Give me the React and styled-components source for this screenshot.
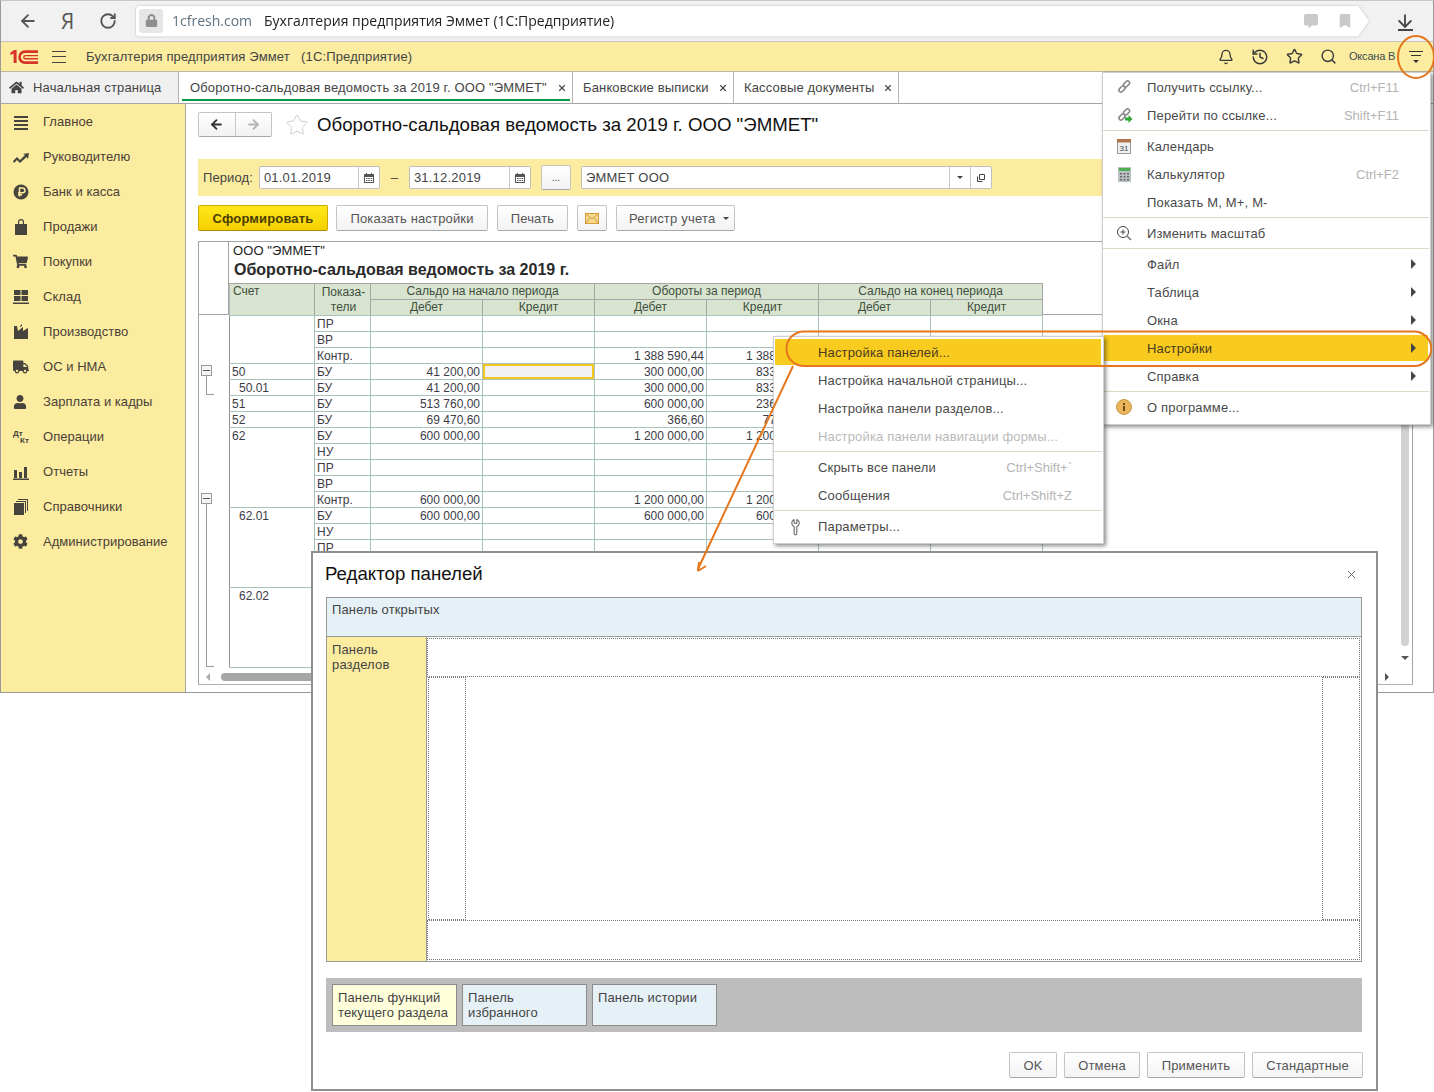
import React from 'react';
import styled, { createGlobalStyle } from 'styled-components';
import { Bell, History, Star, Search, X, RotateCw, ArrowLeft, ArrowDown, Wrench } from 'lucide-react';
import { FaHome, FaShoppingCart, FaTruck, FaUser, FaCog, FaLock, FaBookmark, FaCommentAlt } from 'react-icons/fa';

const YELLOW = '#fbeca0';
const LINE = '#a5a5a5';
const GRID = '#a9c2ba';

const GlobalStyle = createGlobalStyle`
  html, body { margin: 0; padding: 0; background: #fff; }
  body { font-family: "Liberation Sans", Arial, sans-serif; font-size: 13px; color: #444; }
  * { box-sizing: border-box; }
`;

const Page = styled.div`
  position: relative;
  width: 1434px;
  height: 1092px;
  overflow: hidden;
  background: #fff;
`;

const Window = styled.div`
  width: 1434px;
  height: 693px;
  border: 1px solid #9a9a9a;
  border-top-color: #c8c8c8;
  display: flex;
  flex-direction: column;
`;

/* browser chrome */
const BrowserBar = styled.div`
  height: 41px;
  flex: none;
  display: flex;
  align-items: center;
  background: #f1f1f1;
  padding-left: 17px;
  border-bottom: 1px solid #c4c4c4;
`;

const NavBtn = styled.div`
  width: ${p => p.w}px;
  display: flex;
  justify-content: flex-start;
  color: #555;
  font-size: ${p => p.size || 14}px;
  font-family: "Open Sans", sans-serif;
`;

const AddressWrap = styled.div`
  width: 1233px;
  margin-left: 2px;
  filter: drop-shadow(0 0 1px #b5b5b5);
`;

const Address = styled.div`
  height: 31px;
  background: #fff;
  border-radius: 4px 0 0 4px;
  display: flex;
  align-items: center;
  padding-left: 3px;
  padding-bottom: 1px;
  clip-path: polygon(0 0, 1222px 0, 100% 50%, 1222px 100%, 0 100%);
  font-family: "Open Sans", sans-serif;
  font-size: 14px;
  color: #222;
`;

const LockBox = styled.div`
  width: 24px;
  height: 24px;
  background: #e6e6e6;
  border-radius: 3px;
  display: flex;
  align-items: center;
  justify-content: center;
  color: #8e8e8e;
  margin-right: 9px;
`;

const Domain = styled.span`
  color: #5e7180;
  margin-right: 12px;
`;

const AddressIcons = styled.div`
  margin-left: auto;
  display: flex;
  gap: 20px;
  padding-right: 17px;
  color: #c9c9c9;
  align-items: center;
`;

const Download = styled.div`
  margin-left: 26px;
  color: #444;
  display: flex;
  flex-direction: column;
  align-items: center;
`;

const DownloadBase = styled.div`
  width: 15px;
  height: 2px;
  background: #444;
  margin-top: -2px;
`;

/* app header */
const AppHeader = styled.div`
  height: 30px;
  flex: none;
  background: ${YELLOW};
  border-bottom: 1px solid #bdb7a0;
  display: flex;
  align-items: center;
  padding-left: 7px;
`;

const Burger = styled.div`
  width: 14px;
  height: 12px;
  margin-left: 12px;
  margin-right: 20px;
  border-top: 1px solid #444;
  border-bottom: 1px solid #444;
  position: relative;
  &::after {
    content: '';
    position: absolute;
    left: 0;
    right: 0;
    top: 4px;
    height: 1px;
    background: #444;
  }
`;

const AppTitle = styled.div`
  letter-spacing: 0.14px;
  white-space: pre;
`;

const HeaderTools = styled.div`
  margin-left: auto;
  display: flex;
  align-items: center;
  color: #3a3a3a;
`;

const ToolIcon = styled.div`
  width: 34px;
  display: flex;
  justify-content: center;
`;

const UserName = styled.div`
  font-size: 11px;
  letter-spacing: -0.2px;
  margin-left: 4px;
  margin-bottom: 1px;
  width: 50px;
  white-space: nowrap;
  overflow: hidden;
  color: #3a4a50;
`;

const MenuToggle = styled.div`
  width: 34px;
  display: flex;
  flex-direction: column;
  align-items: center;
  gap: 3px;
`;

const ToggleBar = styled.div`
  width: ${p => p.w}px;
  height: 1px;
  background: #333;
`;

const ToggleArrow = styled.div`
  border: 3px solid transparent;
  border-top-color: #333;
  border-bottom: 0;
  margin-top: 1px;
`;

/* tabs */
const TabRow = styled.div`
  height: 32px;
  flex: none;
  display: flex;
  border-bottom: 1px solid #a5a5a5;
  background: #fff;
`;

const HomeTab = styled.div`
  width: 178px;
  background: #f0f0f0;
  border-right: 1px solid #b5b5b5;
  display: flex;
  align-items: center;
  padding-left: 8px;
  gap: 9px;
  color: #444;
  letter-spacing: 0.15px;
`;

const Tab = styled.div`
  position: relative;
  display: flex;
  align-items: center;
  padding: 0 0 0 ${p => p.first ? 11 : 10}px;
  width: ${p => p.w}px;
  border-right: 1px solid #b5b5b5;
  white-space: nowrap;
  letter-spacing: 0.15px;
  ${p => p.active && `
    &::after {
      content: '';
      position: absolute;
      left: 3px;
      right: 2px;
      bottom: 2px;
      height: 2px;
      background: #0a9b4a;
    }
  `}
`;

const TabClose = styled(X)`
  position: absolute;
  right: 5px;
  top: 11px;
  color: #444;
`;

/* workspace */
const Workspace = styled.div`
  flex: 1;
  min-height: 0;
  display: flex;
`;

const Sidebar = styled.div`
  width: 185px;
  flex: none;
  background: ${YELLOW};
  border-right: 1px solid #a5a5a5;
`;

const SideItem = styled.div`
  height: 35px;
  display: flex;
  align-items: center;
  padding-left: 12px;
  color: #4a4036;
  letter-spacing: 0.04px;
`;

const SideIcon = styled.div`
  width: 30px;
  flex: none;
  display: flex;
  color: #46443c;
`;

const DtKt = styled.div`
  font-size: 8px;
  font-weight: bold;
  line-height: 7px;
  width: 16px;
`;

const KtLine = styled.div`
  text-align: right;
`;

const Main = styled.div`
  flex: 1;
  min-width: 0;
  padding: 8px 20px 7px 12px;
  display: flex;
  flex-direction: column;
`;

const TitleRow = styled.div`
  height: 25px;
  display: flex;
  align-items: center;
  flex: none;
`;

const NavGroup = styled.div`
  display: flex;
  width: 74px;
  height: 25px;
  border: 1px solid #c4c4c4;
  border-bottom-color: #a8a8a8;
  border-radius: 2px;
  background: linear-gradient(#fff, #f2f2f2);
`;

const NavCell = styled.div`
  width: 37px;
  display: flex;
  align-items: center;
  justify-content: center;
  color: ${p => p.off ? '#b5b5b5' : '#333'};
  & + & { border-left: 1px solid #c8c8c8; }
`;

const ForwardArrow = styled(ArrowLeft)`
  transform: scaleX(-1);
`;

const BigStar = styled(Star)`
  margin-left: 13px;
  margin-right: 8px;
  color: #c9cdd0;
`;

const Title = styled.div`
  font-size: 18.67px;
  color: #111;
  white-space: nowrap;
`;

const FilterBar = styled.div`
  height: 37px;
  margin-top: 22px;
  flex: none;
  background: ${YELLOW};
  display: flex;
  align-items: center;
  padding-left: 5px;
`;

const FieldLabel = styled.div`
  margin-right: 6px;
  letter-spacing: 0.1px;
`;

const DateField = styled.div`
  width: ${p => p.w}px;
  height: 23px;
  background: #fff;
  border: 1px solid #bfbfbf;
  border-radius: 2px;
  display: flex;
  align-items: center;
  padding-left: 4px;
  letter-spacing: 0.2px;
`;

const FieldBtn = styled.div`
  margin-left: ${p => p.next ? 0 : 'auto'};
  width: 21px;
  height: 100%;
  border-left: 1px solid #c8c8c8;
  display: flex;
  align-items: center;
  justify-content: center;
`;

const Dash = styled.div`
  width: 29px;
  text-align: center;
`;

const DotsBtn = styled.div`
  width: 30px;
  height: 25px;
  margin: 0 10px;
  border: 1px solid #c4c4c4;
  border-bottom-color: #a8a8a8;
  border-radius: 2px;
  background: linear-gradient(#fff, #f2f2f2);
  display: flex;
  align-items: center;
  justify-content: center;
  font-size: 10px;
`;

const Toolbar = styled.div`
  display: flex;
  gap: 9px;
  margin-top: 9px;
  flex: none;
`;

const Button = styled.div`
  width: ${p => p.w}px;
  height: 26px;
  margin-left: ${p => p.pull ? -1 : 0}px;
  border: 1px solid ${p => p.primary ? '#cda900' : '#c4c4c4'};
  border-bottom-color: ${p => p.primary ? '#a88b00' : '#a8a8a8'};
  border-radius: 2px;
  background: ${p => p.primary ? 'linear-gradient(#ffe81a, #f5d000)' : 'linear-gradient(#fff, #f3f3f3)'};
  display: flex;
  align-items: center;
  justify-content: center;
  gap: 6px;
  font-weight: ${p => p.primary ? 'bold' : 'normal'};
  color: ${p => p.primary ? '#4a3d00' : '#555'};
  letter-spacing: 0.15px;
  white-space: nowrap;
`;

const DropButton = styled(Button)`
  justify-content: flex-start;
  gap: 8px;
  padding-left: 12px;
  letter-spacing: 0.2px;
`;

const Caret = styled.div`
  border: 3px solid transparent;
  border-top-color: #444;
  border-bottom: 0;
`;

/* report */
const Report = styled.div`
  position: relative;
  margin-top: 10px;
  flex: 1;
  min-height: 0;
  overflow: hidden;
  border: 1px solid ${LINE};
  border-bottom-color: #b0b0b0;
`;

const ReportHead = styled.div`
  display: flex;
  border-bottom: 1px solid ${LINE};
  height: 73px;
`;

const ReportBody = styled.div`
  display: flex;
  align-items: flex-start;
`;

const Gutter = styled.div`
  width: 30px;
  flex: none;
  border-right: 1px solid ${LINE};
`;

const TreeGutter = styled.div`
  width: 30px;
  flex: none;
  padding: 0 0 0 2px;
`;

const TreeNode = styled.div`
  margin-top: ${p => p.top}px;
`;

const TreeBox = styled.div`
  width: 11px;
  height: 11px;
  border: 1px solid #9a9a9a;
  display: flex;
  align-items: center;
  justify-content: center;
  background: #f4f4f4;
  &::before {
    content: '';
    width: 7px;
    height: 1px;
    background: #555;
  }
`;

const TreeLine = styled.div`
  margin-left: 5px;
  width: 8px;
  height: ${p => p.h}px;
  border-left: 1px solid #9a9a9a;
  border-bottom: 1px solid #9a9a9a;
`;

const HeadBody = styled.div`
  flex: 1;
  min-width: 0;
`;

const Company = styled.div`
  height: 16px;
  padding: 1px 0 0 4px;
  color: #222;
  letter-spacing: 0.1px;
`;

const ReportName = styled.div`
  height: 25px;
  padding: 3px 0 0 5px;
  font-size: 16px;
  font-weight: bold;
  color: #2a2a2a;
`;

const Sheet = styled.table`
  table-layout: fixed;
  border-collapse: collapse;
  width: 813px;
  font-size: 12px;
`;

const HeadRow = styled.tr`
  height: ${p => p.h}px;
`;

const HeadCell = styled.td`
  padding: 0 2px;
  background: #d8e4cf;
  border: 1px solid ${LINE};
  border-left-color: #b8b8b8;
  color: #3f4f3f;
  text-align: ${p => p.left ? 'left' : 'center'};
  vertical-align: ${p => p.left ? 'top' : 'middle'};
  line-height: 15px;
  overflow: hidden;
  padding-left: ${p => p.left ? 3 : 2}px;
`;

const IndicatorHead = styled(HeadCell)`
  padding-left: 4px;
  padding-right: 2px;
`;

const Cell = styled.td`
  height: 16px;
  padding: ${p => p.top ? 1 : 0}px 2px 0;
  border: 1px solid ${GRID};
  ${p => p.top && 'border-left-color: #8f8f8f;'}
  color: #3c3c46;
  text-align: ${p => p.right ? 'right' : 'left'};
  vertical-align: ${p => p.top ? 'top' : 'middle'};
  white-space: nowrap;
  overflow: hidden;
  line-height: 14px;
  padding-left: ${p => p.indent ? 9 : 2}px;
  ${p => p.selected && `
    box-shadow: inset 0 0 0 2px #f4c620;
    background: #f1f1f1;
  `}
`;

const VThumb = styled.div`
  position: absolute;
  right: 3px;
  top: 170px;
  width: 8px;
  height: 234px;
  border-radius: 4px;
  background: #d2d2d2;
`;

const HThumb = styled.div`
  position: absolute;
  left: 22px;
  bottom: 3px;
  width: 300px;
  height: 8px;
  border-radius: 4px;
  background: #a6a6a6;
`;

const ScrollArrow = styled.div`
  position: absolute;
  ${p => p.pos}
  border: 4px solid transparent;
  ${p => p.dir === 'down' && `border-top-color: #555; border-bottom: 0;`}
  ${p => p.dir === 'right' && `border-left-color: #555; border-right: 0;`}
  ${p => p.dir === 'left' && `border-right-color: #aaa; border-left: 0;`}
`;

/* drop down menus */
const Menu = styled.div`
  position: absolute;
  left: ${p => p.x}px;
  top: ${p => p.y}px;
  width: ${p => p.w}px;
  padding: ${p => p.pad}px 1px 3px 0;
  background: #fff;
  border: 1px solid #cfcfcf;
  box-shadow: 2px 2px 4px rgba(0, 0, 0, .45);
  z-index: ${p => p.z};
`;

const MenuRow = styled.div`
  height: 28px;
  display: flex;
  align-items: center;
  position: relative;
  padding-left: 44px;
  padding-right: 30px;
  letter-spacing: 0.16px;
  white-space: nowrap;
  color: ${p => p.disabled ? '#b9b9b9' : '#4a4a4a'};
  ${p => p.active && `
    background: #f9cb1e;
    box-shadow: inset 0 0 0 1px #fff;
    color: #4a3a20;
  `}
`;

const MenuIcon = styled.div`
  position: absolute;
  left: 12px;
  top: 6px;
  width: 18px;
  height: 16px;
  display: flex;
  align-items: center;
  justify-content: center;
  color: #777;
`;

const Spanner = styled(Wrench)`
  transform: rotate(-45deg);
`;

const Shortcut = styled.span`
  margin-left: auto;
  color: #b4b4b4;
  letter-spacing: 0;
`;

const SubArrow = styled.div`
  position: absolute;
  right: 13px;
  top: 9px;
  border: 5px solid transparent;
  border-left-color: #444;
  border-right: 0;
`;

const MenuSep = styled.div`
  height: 1px;
  margin: 1px 0;
  background: #ddd9c8;
`;

/* dialog */
const Dialog = styled.div`
  position: absolute;
  left: 311px;
  top: 551px;
  width: 1067px;
  height: 540px;
  background: #fff;
  border: 2px solid #8e8e8e;
  padding: 0 14px 0 13px;
  display: flex;
  flex-direction: column;
  z-index: 5;
`;

const DialogHead = styled.div`
  height: 44px;
  flex: none;
  display: flex;
  align-items: center;
  justify-content: space-between;
  margin-left: -1px;
  padding-right: 4px;
  padding-bottom: 2px;
  font-size: 18.67px;
  color: #111;
`;

const PanelBox = styled.div`
  height: 365px;
  flex: none;
  border: 1px solid #999;
  display: grid;
  grid-template-columns: 100px 1fr;
  grid-template-rows: 39px 1fr;
`;

const OpenPanel = styled.div`
  grid-column: 1 / 3;
  background: #e6f1f7;
  border-bottom: 1px solid #999;
  padding: 4px 5px;
  letter-spacing: 0.15px;
`;

const SectionPanel = styled.div`
  background: ${YELLOW};
  border-right: 1px solid #999;
  padding: 5px;
  line-height: 15px;
  letter-spacing: 0.15px;
`;

const Work = styled.div`
  display: flex;
  flex-direction: column;
  padding: 1px 1px 1px 0;
`;

const Dotted = styled.div`
  height: ${p => p.h}px;
  border: 1px dotted #777;
`;

const WorkMiddle = styled.div`
  flex: 1;
  display: flex;
  justify-content: space-between;
  padding-left: 1px;
`;

const SideSlot = styled.div`
  width: ${p => p.w}px;
  border: 1px dotted #777;
`;

const GrayBand = styled.div`
  margin-top: 16px;
  height: 54px;
  flex: none;
  background: #bdbdbd;
  display: flex;
  gap: 5px;
  padding: 6px;
`;

const Card = styled.div`
  width: 125px;
  height: 42px;
  border: 1px solid #8b8b8b;
  background: ${p => p.yellow ? '#ffffdc' : '#e6f1f7'};
  padding: 5px;
  line-height: 15px;
  letter-spacing: 0.15px;
  color: #444;
`;

const DialogFoot = styled.div`
  margin-top: 20px;
  margin-right: -1px;
  display: flex;
  justify-content: flex-end;
  gap: 7px;
`;

const Overlay = styled.svg`
  position: absolute;
  left: 0;
  top: 0;
  z-index: 10;
  pointer-events: none;
`;

const Logo = () => (
  <svg width="32" height="18" viewBox="0 0 32 18" fill="none">
    <path d="M2 5l4-3h2.600v13H5.600V5.600L3 7z" fill="#d8352a" />
    <path d="M30 3.600H17a5.500 5.500 0 0 0 0 11h13" stroke="#d8352a" strokeWidth="2.600" />
    <path d="M30 7.600H17.400a1.600 1.600 0 0 0 0 3.200H30" stroke="#d8352a" strokeWidth="1.400" />
  </svg>
);

const LinkGlyph = ({ go }) => (
  <svg width="17" height="16" viewBox="0 0 17 16" fill="none">
    <rect x="-3.500" y="-2" width="7" height="4" rx="2" transform="translate(10.500 5) rotate(-45)" stroke="#8a8a8a" strokeWidth="1.600" />
    <rect x="-3.500" y="-2" width="7" height="4" rx="2" transform="translate(6 10) rotate(-45)" stroke="#8a8a8a" strokeWidth="1.600" />
    {go && <path d="M9 10.500h3.500V8l4 4-4 4v-2.500H9z" fill="#2fa83a" />}
  </svg>
);

const icon = (children, w = 16, h = 16, vb = '0 0 16 16') => (
  <svg width={w} height={h} viewBox={vb} fill="currentColor">{children}</svg>
);

const SIDE_ITEMS = [
  ['Главное', icon(<path d="M1 2h14v2H1zM1 6h14v2H1zM1 10h14v2H1zM1 14h14v2H1z" />)],
  ['Руководителю', icon(<path d="M0 12l4-4 3 3 5-5-2-1 6-1-1 6-1.500-2-6.500 6-3-3-3 3z" />)],
  ['Банк и касса', (
    <svg width="16" height="16" viewBox="0 0 16 16">
      <circle cx="8" cy="8" r="7.500" fill="currentColor" />
      <path d="M6.500 12.500V4h3a2.300 2.300 0 0 1 0 4.800H5M5 10.800h4" stroke="#fbeca0" strokeWidth="1.500" fill="none" />
    </svg>
  )],
  ['Продажи', icon(<path d="M2 5h12v11H2zM5 5V3a3 3 0 0 1 6 0v2H9.800V3a1.800 1.800 0 0 0-3.600 0v2z" />)],
  ['Покупки', <FaShoppingCart size={15} />],
  ['Склад', icon(<path d="M1 1h6.500v5H1zM8.500 1H15v5H8.500zM1 7h6.500v5H1zM8.500 7H15v5H8.500zM0 13.500h16V15H0z" />)],
  ['Производство', icon(<path d="M1 15V2l3 0 1 5 5-4v4l5-3v11zM7 2l2-2v2l-2 1z" />)],
  ['ОС и НМА', <FaTruck size={16} />],
  ['Зарплата и кадры', <FaUser size={14} />],
  ['Операции', <DtKt>Дт<KtLine>Кт</KtLine></DtKt>],
  ['Отчеты', icon(<path d="M1 6h3v8H1zM6 8h3v6H6zM11 3h3v11h-3zM0 14.500h16V16H0z" />)],
  ['Справочники', icon(<path d="M1 4h10v12H1zM3 2h10v12h-1V3H3zM5 0h10v12h-1V1H5z" />)],
  ['Администрирование', <FaCog size={15} />],
];

// [account, rowspan, indent, indicator, opening debit, turnover debit, turnover credit, selected]
const ROWS = [
  ['', 3, false, 'ПР', '', '', ''],
  [null, 0, false, 'ВР', '', '', ''],
  [null, 0, false, 'Контр.', '', '1 388 590,44', '1 388 590,44'],
  ['50', 1, false, 'БУ', '41 200,00', '300 000,00', '833 333,33', true],
  ['50.01', 1, true, 'БУ', '41 200,00', '300 000,00', '833 333,33'],
  ['51', 1, false, 'БУ', '513 760,00', '600 000,00', '236 000,00'],
  ['52', 1, false, 'БУ', '69 470,60', '366,60', '77 000,00'],
  ['62', 5, false, 'БУ', '600 000,00', '1 200 000,00', '1 200 000,00'],
  [null, 0, false, 'НУ', '', '', ''],
  [null, 0, false, 'ПР', '', '', ''],
  [null, 0, false, 'ВР', '', '', ''],
  [null, 0, false, 'Контр.', '600 000,00', '1 200 000,00', '1 200 000,00'],
  ['62.01', 5, true, 'БУ', '600 000,00', '600 000,00', '600 000,00'],
  [null, 0, false, 'НУ', '', '', ''],
  [null, 0, false, 'ПР', '', '', ''],
  [null, 0, false, '', '', '', ''],
  [null, 0, false, '', '', '', ''],
  ['62.02', 5, true, '', '', '', ''],
  [null, 0, false, '', '', '', ''],
  [null, 0, false, '', '', '', ''],
  [null, 0, false, '', '', '', ''],
  [null, 0, false, '', '', '', ''],
];

const COLS = [85, 56, 112, 112, 112, 112, 112, 112];

const Cols = () => (
  <colgroup>
    {COLS.map((w, i) => <col key={i} style={{ width: w }} />)}
  </colgroup>
);

const CalendarGlyph = () => (
  <svg width="12" height="12" viewBox="0 0 12 12" fill="#555">
    <path d="M1 2h10v9H1zM2 5v5h8V5zM3 1h1v2H3zM8 1h1v2H8z" />
    <path d="M3 6h1.500v1H3zM5.300 6h1.500v1H5.300zM7.600 6h1.500v1H7.600zM3 8h1.500v1H3zM5.300 8h1.500v1H5.300zM7.600 8h1.500v1H7.600z" />
  </svg>
);

const App = () => (
  <Page>
    <GlobalStyle />
    <Window>
      <BrowserBar>
        <NavBtn w={43}><ArrowLeft size={20} strokeWidth={2.2} /></NavBtn>
        <NavBtn w={38} size={21}>Я</NavBtn>
        <NavBtn w={35}><RotateCw size={18} strokeWidth={2.4} /></NavBtn>
        <AddressWrap>
          <Address>
            <LockBox><FaLock size={13} /></LockBox>
            <Domain>1cfresh.com</Domain>
            Бухгалтерия предприятия Эммет (1С:Предприятие)
            <AddressIcons>
              <FaCommentAlt size={14} />
              <FaBookmark size={14} />
            </AddressIcons>
          </Address>
        </AddressWrap>
        <Download>
          <ArrowDown size={20} strokeWidth={2.2} />
          <DownloadBase />
        </Download>
      </BrowserBar>

      <AppHeader>
        <Logo />
        <Burger />
        <AppTitle>Бухгалтерия предприятия Эммет   (1С:Предприятие)</AppTitle>
        <HeaderTools>
          <ToolIcon><Bell size={16} /></ToolIcon>
          <ToolIcon><History size={18} /></ToolIcon>
          <ToolIcon><Star size={17} /></ToolIcon>
          <ToolIcon><Search size={17} /></ToolIcon>
          <UserName>Оксана В</UserName>
          <MenuToggle>
            <ToggleBar w={14} />
            <ToggleBar w={10} />
            <ToggleArrow />
          </MenuToggle>
        </HeaderTools>
      </AppHeader>

      <TabRow>
        <HomeTab><FaHome size={15} color="#444" />Начальная страница</HomeTab>
        <Tab active first w={394}>
          Оборотно-сальдовая ведомость за 2019 г. ООО "ЭММЕТ"
          <TabClose size={10} strokeWidth={2.6} />
        </Tab>
        <Tab w={161}>Банковские выписки<TabClose size={10} strokeWidth={2.6} /></Tab>
        <Tab w={165}>Кассовые документы<TabClose size={10} strokeWidth={2.6} /></Tab>
      </TabRow>

      <Workspace>
        <Sidebar>
          {SIDE_ITEMS.map(([name, ic]) => (
            <SideItem key={name}><SideIcon>{ic}</SideIcon>{name}</SideItem>
          ))}
        </Sidebar>
        <Main>
          <TitleRow>
            <NavGroup>
              <NavCell><ArrowLeft size={15} strokeWidth={3} /></NavCell>
              <NavCell off><ForwardArrow size={15} strokeWidth={3} /></NavCell>
            </NavGroup>
            <BigStar size={24} strokeWidth={1} />
            <Title>Оборотно-сальдовая ведомость за 2019 г. ООО "ЭММЕТ"</Title>
          </TitleRow>

          <FilterBar>
            <FieldLabel>Период:</FieldLabel>
            <DateField w={121}>01.01.2019<FieldBtn><CalendarGlyph /></FieldBtn></DateField>
            <Dash>–</Dash>
            <DateField w={122}>31.12.2019<FieldBtn><CalendarGlyph /></FieldBtn></DateField>
            <DotsBtn>...</DotsBtn>
            <DateField w={411}>
              ЭММЕТ ООО
              <FieldBtn><Caret /></FieldBtn>
              <FieldBtn next>
                <svg width="10" height="10" viewBox="0 0 10 10" fill="none" stroke="#444">
                  <path d="M3.500 1.500h5v5h-5zM1.500 3.500v5h5" />
                </svg>
              </FieldBtn>
            </DateField>
          </FilterBar>

          <Toolbar>
            <Button primary w={130}>Сформировать</Button>
            <Button pull w={152}>Показать настройки</Button>
            <Button w={71}>Печать</Button>
            <Button w={30}>
              <svg width="14" height="11" viewBox="0 0 14 11">
                <rect x=".5" y=".5" width="13" height="10" fill="#f6d98c" stroke="#d99a3a" />
                <path d="M.5.500L7 6 13.500.500M.5 10.500L5 4.500M13.500 10.500L9 4.500" stroke="#d99a3a" fill="none" />
              </svg>
            </Button>
            <DropButton w={119}>Регистр учета<Caret /></DropButton>
          </Toolbar>

          <Report>
            <ReportHead>
              <Gutter />
              <HeadBody>
                <Company>ООО "ЭММЕТ"</Company>
                <ReportName>Оборотно-сальдовая ведомость за 2019 г.</ReportName>
                <Sheet>
                  <Cols />
                  <tbody>
                    <HeadRow h={15}>
                      <HeadCell left rowSpan={2}>Счет</HeadCell>
                      <IndicatorHead rowSpan={2}>Показа-<br />тели</IndicatorHead>
                      <HeadCell colSpan={2}>Сальдо на начало периода</HeadCell>
                      <HeadCell colSpan={2}>Обороты за период</HeadCell>
                      <HeadCell colSpan={2}>Сальдо на конец периода</HeadCell>
                    </HeadRow>
                    <HeadRow h={16}>
                      {['Дебет', 'Кредит', 'Дебет', 'Кредит', 'Дебет', 'Кредит'].map((t, i) => (
                        <HeadCell key={i}>{t}</HeadCell>
                      ))}
                    </HeadRow>
                  </tbody>
                </Sheet>
              </HeadBody>
            </ReportHead>
            <ReportBody>
              <TreeGutter>
                <TreeNode top={50}>
                  <TreeBox />
                  <TreeLine h={19} />
                </TreeNode>
                <TreeNode top={98}>
                  <TreeBox />
                  <TreeLine h={163} />
                </TreeNode>
              </TreeGutter>
              <Sheet>
                <Cols />
                <tbody>
                  {ROWS.map((r, i) => (
                    <tr key={i}>
                      {r[1] > 0 && <Cell top indent={r[2]} rowSpan={r[1]}>{r[0]}</Cell>}
                      <Cell>{r[3]}</Cell>
                      <Cell right>{r[4]}</Cell>
                      <Cell selected={r[7]} />
                      <Cell right>{r[5]}</Cell>
                      <Cell right>{r[6]}</Cell>
                      <Cell />
                      <Cell />
                    </tr>
                  ))}
                </tbody>
              </Sheet>
            </ReportBody>
            <VThumb />
            <HThumb />
            <ScrollArrow dir="down" pos="right: 3px; bottom: 24px;" />
            <ScrollArrow dir="right" pos="right: 23px; bottom: 3px;" />
            <ScrollArrow dir="left" pos="left: 7px; bottom: 3px;" />
          </Report>
        </Main>
      </Workspace>
    </Window>

    <Menu x={1102} y={72} w={329} pad={0} z={3}>
      <MenuRow><MenuIcon><LinkGlyph /></MenuIcon>Получить ссылку...<Shortcut>Ctrl+F11</Shortcut></MenuRow>
      <MenuRow><MenuIcon><LinkGlyph go /></MenuIcon>Перейти по ссылке...<Shortcut>Shift+F11</Shortcut></MenuRow>
      <MenuSep />
      <MenuRow>
        <MenuIcon>
          <svg width="14" height="15" viewBox="0 0 14 15">
            <rect x=".5" y="1" width="13" height="13.500" fill="#eef0f2" stroke="#9a9a9a" />
            <rect x="0" y="0" width="14" height="3.500" fill="#b0764a" />
            <text x="7" y="12" fontSize="8" textAnchor="middle" fill="#444" fontFamily="Liberation Sans">31</text>
          </svg>
        </MenuIcon>
        Календарь
      </MenuRow>
      <MenuRow>
        <MenuIcon>
          <svg width="13" height="15" viewBox="0 0 13 15">
            <rect width="13" height="15" fill="#b9c0c4" />
            <rect x="1" y="1" width="11" height="3" fill="#4cb050" />
            <path d="M2 6h2v1.500H2zM5.500 6h2v1.500h-2zM9 6h2v1.500H9zM2 9h2v1.500H2zM5.500 9h2v1.500h-2zM9 9h2v1.500H9zM2 12h2v1.500H2zM5.500 12h2v1.500h-2zM9 12h2v1.500H9z" fill="#666" />
          </svg>
        </MenuIcon>
        Калькулятор<Shortcut>Ctrl+F2</Shortcut>
      </MenuRow>
      <MenuRow>Показать М, М+, М-</MenuRow>
      <MenuSep />
      <MenuRow>
        <MenuIcon>
          <svg width="16" height="16" viewBox="0 0 16 16" fill="none" stroke="#444">
            <circle cx="7" cy="7" r="5.500" />
            <path d="M7 4.500v5M4.500 7h5" />
            <path d="M11 11l4 4" strokeWidth="1.600" stroke="#777" />
          </svg>
        </MenuIcon>
        Изменить масштаб
      </MenuRow>
      <MenuSep />
      <MenuRow>Файл<SubArrow /></MenuRow>
      <MenuRow>Таблица<SubArrow /></MenuRow>
      <MenuRow>Окна<SubArrow /></MenuRow>
      <MenuRow active>Настройки<SubArrow /></MenuRow>
      <MenuRow>Справка<SubArrow /></MenuRow>
      <MenuSep />
      <MenuRow>
        <MenuIcon>
          <svg width="16" height="16" viewBox="0 0 16 16">
            <circle cx="8" cy="8" r="7.500" fill="#e9b55c" stroke="#c99a48" />
            <path d="M7 4h2v2H7zM7 7h2v5H7z" fill="#6b4a1a" />
          </svg>
        </MenuIcon>
        О программе...
      </MenuRow>
    </Menu>

    <Menu x={773} y={336} w={331} pad={1} z={4}>
      <MenuRow active>Настройка панелей...</MenuRow>
      <MenuRow>Настройка начальной страницы...</MenuRow>
      <MenuRow>Настройка панели разделов...</MenuRow>
      <MenuRow disabled>Настройка панели навигации формы...</MenuRow>
      <MenuSep />
      <MenuRow>Скрыть все панели<Shortcut>Ctrl+Shift+`</Shortcut></MenuRow>
      <MenuRow>Сообщения<Shortcut>Ctrl+Shift+Z</Shortcut></MenuRow>
      <MenuSep />
      <MenuRow><MenuIcon><Spanner size={15} /></MenuIcon>Параметры...</MenuRow>
    </Menu>

    <Dialog>
      <DialogHead>
        Редактор панелей
        <X size={13} strokeWidth={1.500} color="#444" />
      </DialogHead>
      <PanelBox>
        <OpenPanel>Панель открытых</OpenPanel>
        <SectionPanel>Панель<br />разделов</SectionPanel>
        <Work>
          <Dotted h={39} />
          <WorkMiddle>
            <SideSlot w={38} />
            <SideSlot w={38} />
          </WorkMiddle>
          <Dotted h={40} />
        </Work>
      </PanelBox>
      <GrayBand>
        <Card yellow>Панель функций текущего раздела</Card>
        <Card>Панель<br />избранного</Card>
        <Card>Панель истории</Card>
      </GrayBand>
      <DialogFoot>
        <Button w={48}>OK</Button>
        <Button w={76}>Отмена</Button>
        <Button w={98}>Применить</Button>
        <Button w={111}>Стандартные</Button>
      </DialogFoot>
    </Dialog>

    <Overlay width="1434" height="1092" fill="none" stroke="#e5761c" strokeWidth="2">
      <ellipse cx="1416" cy="57" rx="18" ry="21" />
      <path d="M808 331.500H1414a17 17 0 0 1 0 34.500H804a17.500 17.250 0 0 1 0-34.500z" />
      <path d="M793 366L698 569" />
      <path d="M698 571l1-9M698 571l8-5" />
    </Overlay>
  </Page>
);

export default App;
